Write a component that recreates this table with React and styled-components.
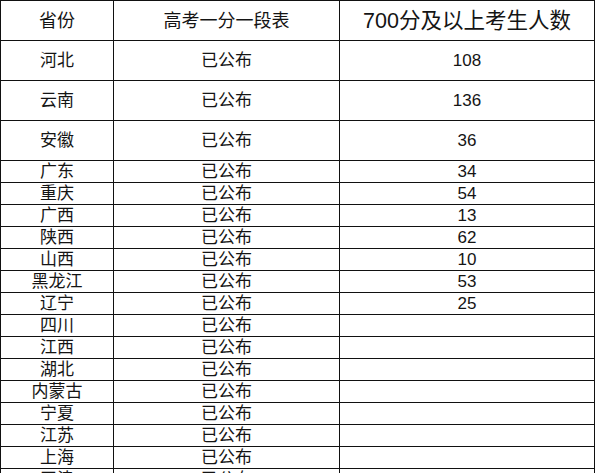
import styled, { createGlobalStyle } from 'styled-components';

const GlobalStyle = createGlobalStyle`
  html, body {
    margin: 0;
    padding: 0;
    background: #fff;
  }
  body {
    font-family: "Liberation Sans", "Noto Sans CJK SC", sans-serif;
    color: #141414;
  }
`;

const StyledTable = styled.table`
  width: 594px;
  table-layout: fixed;
  border-collapse: collapse;
  background: #fff;
`;

const StyledHeaderCell = styled.th`
  height: 39px;
  padding: 0;
  border: 1px solid #111;
  font-weight: normal;
  font-size: ${(props) => (props.$big ? '21.5px' : '18px')};
  line-height: 22px;
  text-align: center;
  vertical-align: middle;
  white-space: nowrap;
`;

const StyledCell = styled.td`
  height: ${(props) => (props.$tall ? '39px' : '20px')};
  padding: ${(props) => (props.$tall ? '0' : '1px 0 0')};
  border: 1px solid #111;
  font-size: 17px;
  line-height: 20px;
  text-align: center;
  vertical-align: middle;
  white-space: nowrap;
  overflow: hidden;
`;

const rows = [
  { name: '河北', count: '108', tall: true },
  { name: '云南', count: '136', tall: true },
  { name: '安徽', count: '36', tall: true },
  { name: '广东', count: '34' },
  { name: '重庆', count: '54' },
  { name: '广西', count: '13' },
  { name: '陕西', count: '62' },
  { name: '山西', count: '10' },
  { name: '黑龙江', count: '53' },
  { name: '辽宁', count: '25' },
  { name: '四川' },
  { name: '江西' },
  { name: '湖北' },
  { name: '内蒙古' },
  { name: '宁夏' },
  { name: '江苏' },
  { name: '上海' },
  { name: '天津' },
];

const App = () => (
  <>
    <GlobalStyle />
    <StyledTable>
      <colgroup>
        <col style={{ width: '113px' }} />
        <col style={{ width: '226px' }} />
        <col style={{ width: '255px' }} />
      </colgroup>
      <thead>
        <tr>
          <StyledHeaderCell>省份</StyledHeaderCell>
          <StyledHeaderCell>高考一分一段表</StyledHeaderCell>
          <StyledHeaderCell $big>700分及以上考生人数</StyledHeaderCell>
        </tr>
      </thead>
      <tbody>
        {rows.map((row) => (
          <tr key={row.name}>
            <StyledCell $tall={row.tall}>{row.name}</StyledCell>
            <StyledCell $tall={row.tall}>已公布</StyledCell>
            <StyledCell $tall={row.tall}>{row.count || ''}</StyledCell>
          </tr>
        ))}
      </tbody>
    </StyledTable>
  </>
);

export default App;
